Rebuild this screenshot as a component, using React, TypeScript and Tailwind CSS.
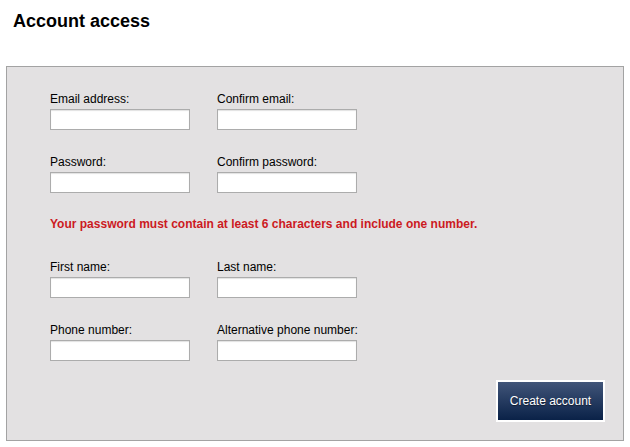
import React from "react";

function Field({ label }: { label: string }) {
  return (
    <div className="flex flex-col w-[140px]">
      <label className="text-[12px] leading-[14px] text-black whitespace-nowrap">{label}</label>
      <input
        type="text"
        className="mt-[3px] w-[140px] h-[21px] bg-white border border-[#acacac] shadow-[inset_0_1px_1px_rgba(0,0,0,0.12)] outline-none"
      />
    </div>
  );
}

function Row({ a, b, className = "" }: { a: string; b: string; className?: string }) {
  return (
    <div className={"flex gap-[27px] " + className}>
      <Field label={a} />
      <Field label={b} />
    </div>
  );
}

export default function App() {
  return (
    <div
      className="w-[630px] h-[447px] bg-white overflow-hidden"
      style={{ fontFamily: '"Liberation Sans", Arial, sans-serif' }}
    >
      <h1 className="pt-[11px] pl-[13px] text-[18px] leading-[21px] font-bold text-black">Account access</h1>
      <div className="mx-[6px] mt-[34px] h-[375px] border border-[#a3a3a3] bg-[#e3e1e2] pt-[25px] pl-[43px] pr-[18px] pb-[18px] flex flex-col">
        <Row a="Email address:" b="Confirm email:" />
        <Row a="Password:" b="Confirm password:" className="mt-[25px]" />
        <p className="mt-[24px] text-[12px] leading-[14px] font-bold text-[#cc1a1f]">
          Your password must contain at least 6 characters and include one number.
        </p>
        <Row a="First name:" b="Last name:" className="mt-[29px]" />
        <Row a="Phone number:" b="Alternative phone number:" className="mt-[25px]" />
        <div className="mt-auto flex justify-end">
          <button className="w-[109px] h-[42px] border-2 border-white bg-gradient-to-b from-[#415579] to-[#0a2248] text-white text-[12px] leading-[14px] [text-shadow:0_1px_1px_rgba(0,0,0,0.5)]">
            Create account
          </button>
        </div>
      </div>
    </div>
  );
}
